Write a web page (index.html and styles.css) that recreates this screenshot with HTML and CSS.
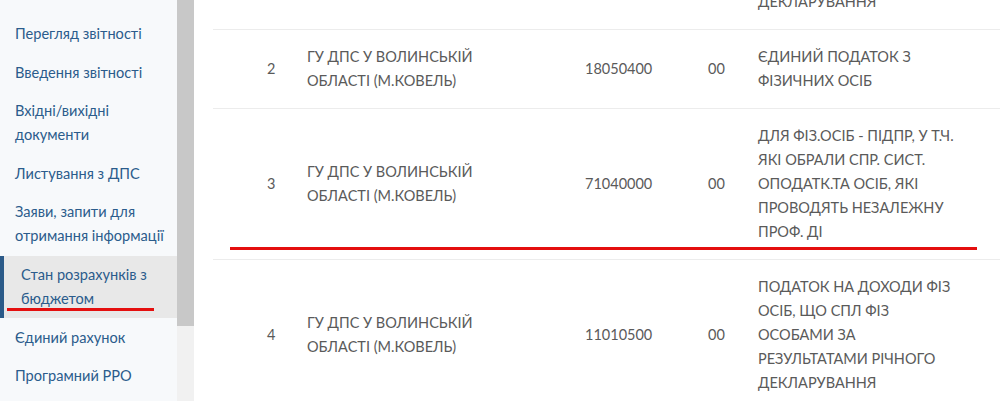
FILE: index.html
```html
<!DOCTYPE html>
<html lang="uk">
<head>
  <meta charset="UTF-8">
  <meta name="viewport" content="width=device-width, initial-scale=1">
  <title>Стан розрахунків з бюджетом</title>
  <link rel="stylesheet" href="styles.css">
</head>
<body>
  <div class="layout">
    <aside class="sidebar">
      <nav class="menu">
        <a class="menu-item" href="#">Перегляд звітності</a>
        <a class="menu-item" href="#">Введення звітності</a>
        <a class="menu-item" href="#">Вхідні/вихідні<br>документи</a>
        <a class="menu-item" href="#">Листування з ДПС</a>
        <a class="menu-item" href="#">Заяви, запити для<br>отримання інформації</a>
        <a class="menu-item active" href="#">Стан розрахунків з<br>бюджетом<span class="red-mark menu-mark"></span></a>
        <a class="menu-item" href="#">Єдиний рахунок</a>
        <a class="menu-item" href="#">Програмний РРО</a>
      </nav>
      <div class="scrollbar"><div class="thumb"></div></div>
    </aside>

    <main class="content">
      <table class="payments">
        <colgroup>
          <col class="c-num"><col class="c-name"><col class="c-code"><col class="c-sub"><col class="c-desc"><col>
        </colgroup>
        <tr>
          <td class="num">1</td>
          <td>ГУ ДПС У ВОЛИНСЬКІЙ<br>ОБЛАСТІ (М.КОВЕЛЬ)</td>
          <td>11010500</td>
          <td>00</td>
          <td>ПОДАТОК НА ДОХОДИ ФІЗ<br>ОСІБ, ЩО СПЛ ФІЗ<br>ОСОБАМИ ЗА<br>РЕЗУЛЬТАТАМИ РІЧНОГО<br>ДЕКЛАРУВАННЯ</td>
          <td></td>
        </tr>
        <tr>
          <td class="num">2</td>
          <td>ГУ ДПС У ВОЛИНСЬКІЙ<br>ОБЛАСТІ (М.КОВЕЛЬ)</td>
          <td>18050400</td>
          <td>00</td>
          <td>ЄДИНИЙ ПОДАТОК З<br>ФІЗИЧНИХ ОСІБ</td>
          <td></td>
        </tr>
        <tr>
          <td class="num">3</td>
          <td>ГУ ДПС У ВОЛИНСЬКІЙ<br>ОБЛАСТІ (М.КОВЕЛЬ)</td>
          <td>71040000</td>
          <td>00</td>
          <td>ДЛЯ ФІЗ.ОСІБ - ПІДПР, У Т.Ч.<br>ЯКІ ОБРАЛИ СПР. СИСТ.<br>ОПОДАТК.ТА ОСІБ, ЯКІ<br>ПРОВОДЯТЬ НЕЗАЛЕЖНУ<br>ПРОФ. ДІ</td>
          <td></td>
        </tr>
        <tr>
          <td class="num">4</td>
          <td>ГУ ДПС У ВОЛИНСЬКІЙ<br>ОБЛАСТІ (М.КОВЕЛЬ)</td>
          <td>11010500</td>
          <td>00</td>
          <td>ПОДАТОК НА ДОХОДИ ФІЗ<br>ОСІБ, ЩО СПЛ ФІЗ<br>ОСОБАМИ ЗА<br>РЕЗУЛЬТАТАМИ РІЧНОГО<br>ДЕКЛАРУВАННЯ</td>
          <td></td>
        </tr>
      </table>
      <!-- annotation under row 3 -->
      <span class="red-mark row-mark"></span>
    </main>
  </div>
</body>
</html>
```

FILE: styles.css
```css
body {
  margin: 0;
  padding: 0;
  background-color: #fff;
  font-family: Lato, "Open Sans", sans-serif;
  overflow: hidden;
}

.layout {
  display: flex;
  height: 401px;
}

.sidebar {
  display: flex;
  flex: 0 0 194px;
  background-color: #f7f9fb;
}

.menu {
  flex: 0 0 177px;
  padding-top: 14.7px;
}

.menu-item {
  position: relative;
  display: block;
  padding: 7.3px 10px 7.3px 15px;
  font-size: 14.6px;
  line-height: 24px;
  color: #2b5c8c;
  text-decoration: none;
  white-space: nowrap;
}

.menu-item.active {
  background-color: #e8e8e8;
  border-left: 4px solid #2b5a88;
  padding-left: 17px;
}

.scrollbar {
  flex: 0 0 17px;
  background-color: #f1f1f1;
}

.thumb {
  height: 326px;
  background-color: #c8c8c8;
}

.content {
  position: relative;
  flex: 1;
  overflow: hidden;
  padding-left: 19px;
}

.payments {
  table-layout: fixed;
  width: 820px;
  border-collapse: collapse;
  margin-top: -121px;
  font-size: 14.5px;
  line-height: 24px;
  color: #5a5a5a;
}

.payments td {
  padding: 15px 0;
  border-bottom: 1px solid #ececec;
  vertical-align: middle;
  white-space: nowrap;
}

.payments td.num {
  padding-left: 54px;
}

.c-num { width: 94px; }
.c-name { width: 278px; }
.c-code { width: 123px; }
.c-sub { width: 50px; }
.c-desc { width: 220px; }

.red-mark {
  position: absolute;
  height: 3px;
  background-color: #e40f0f;
}

.menu-mark {
  left: 3px;
  top: 52px;
  width: 147px;
}

.row-mark {
  left: 36px;
  top: 247px;
  width: 747px;
}
```
